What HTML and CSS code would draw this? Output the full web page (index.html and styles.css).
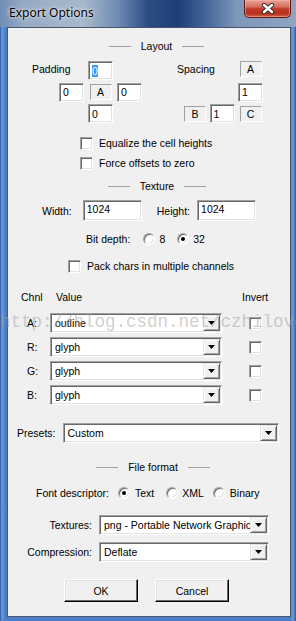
FILE: index.html
```html
<!DOCTYPE html>
<html>
<head>
<meta charset="utf-8">
<title>Export Options</title>
<link rel="stylesheet" href="styles.css">
</head>
<body>
<div class="window">
  <div class="titlebar">
    <span class="title">Export Options</span>
    <div class="close">
      <svg width="14" height="11" viewBox="0 0 14 11">
        <path d="M3 2 L11 9 M11 2 L3 9" stroke="#3b3030" stroke-width="4.4" stroke-linecap="round"/>
        <path d="M3 2 L11 9 M11 2 L3 9" stroke="#ffffff" stroke-width="2.4" stroke-linecap="round"/>
      </svg>
    </div>
  </div>
  <div class="client">
    <div class="heading h-layout"><span class="rule"></span><span>Layout</span><span class="rule"></span></div>
    <div class="layout-row">
      <div class="pad-grid">
        <span class="glabel">Padding</span>
        <div class="field f-top"><span class="sel">0</span></div>
        <div class="field f-left">0</div>
        <div class="sbox s-mid">A</div>
        <div class="field f-right">0</div>
        <div class="field f-bottom">0</div>
      </div>
      <div class="spc-grid">
        <span class="glabel">Spacing</span>
        <div class="sbox s-a">A</div>
        <div class="field f-c2r2">1</div>
        <div class="sbox s-b">B</div>
        <div class="field f-c1r3">1</div>
        <div class="sbox s-c">C</div>
      </div>
    </div>
    <div class="checks">
      <div class="check"><span class="cb"></span><span>Equalize the cell heights</span></div>
      <div class="check"><span class="cb"></span><span>Force offsets to zero</span></div>
    </div>
    <div class="heading h-texture"><span class="rule"></span><span>Texture</span><span class="rule"></span></div>
    <div class="size-row">
      <span>Width:</span>
      <div class="field wide w-first">1024</div>
      <span class="h-label">Height:</span>
      <div class="field wide w-second">1024</div>
    </div>
    <div class="bit-row">
      <span>Bit depth:</span>
      <span class="rd r-first"></span><span class="rtext">8</span>
      <span class="rd on r-gap"></span><span class="rtext">32</span>
    </div>
    <div class="check pack"><span class="cb"></span><span>Pack chars in multiple channels</span></div>
    <div class="chan-table">
      <span class="th">Chnl</span>
      <span class="th th-value">Value</span>
      <span class="th th-invert">Invert</span>

      <span class="rowlabel">A:</span>
      <div class="combo"><span class="val">outline</span><span class="drop"><svg width="7" height="4" viewBox="0 0 7 4"><polygon points="0,0 7,0 3.5,4" fill="#000"/></svg></span></div>
      <span class="cb inv"></span>

      <span class="rowlabel">R:</span>
      <div class="combo"><span class="val">glyph</span><span class="drop"><svg width="7" height="4" viewBox="0 0 7 4"><polygon points="0,0 7,0 3.5,4" fill="#000"/></svg></span></div>
      <span class="cb inv"></span>

      <span class="rowlabel">G:</span>
      <div class="combo"><span class="val">glyph</span><span class="drop"><svg width="7" height="4" viewBox="0 0 7 4"><polygon points="0,0 7,0 3.5,4" fill="#000"/></svg></span></div>
      <span class="cb inv"></span>

      <span class="rowlabel">B:</span>
      <div class="combo"><span class="val">glyph</span><span class="drop"><svg width="7" height="4" viewBox="0 0 7 4"><polygon points="0,0 7,0 3.5,4" fill="#000"/></svg></span></div>
      <span class="cb inv"></span>
    </div>
    <div class="presets-row">
      <span>Presets:</span>
      <div class="combo presets"><span class="val">Custom</span><span class="drop"><svg width="7" height="4" viewBox="0 0 7 4"><polygon points="0,0 7,0 3.5,4" fill="#000"/></svg></span></div>
    </div>
    <div class="heading h-file"><span class="rule"></span><span>File format</span><span class="rule"></span></div>
    <div class="fd-row">
      <span>Font descriptor:</span>
      <span class="rd on fd-r1"></span><span class="rtext2">Text</span>
      <span class="rd fd-r2"></span><span class="rtext">XML</span>
      <span class="rd fd-r3"></span><span class="rtext2">Binary</span>
    </div>
    <div class="form-rows">
      <span class="flabel">Textures:</span>
      <div class="combo"><span class="val">png - Portable Network Graphics</span><span class="drop"><svg width="7" height="4" viewBox="0 0 7 4"><polygon points="0,0 7,0 3.5,4" fill="#000"/></svg></span></div>
      <span class="flabel">Compression:</span>
      <div class="combo"><span class="val">Deflate</span><span class="drop"><svg width="7" height="4" viewBox="0 0 7 4"><polygon points="0,0 7,0 3.5,4" fill="#000"/></svg></span></div>
    </div>
    <div class="buttons">
      <div class="btn">OK</div>
      <div class="btn">Cancel</div>
    </div>
  </div>
  <div class="watermark">http://blog.csdn.net/czhilove</div>
</div>
</body>
</html>
```
FILE: styles.css
```css
html, body {
  margin: 0;
  padding: 0;
}
body {
  width: 296px;
  height: 621px;
  overflow: hidden;
  font-family: "Liberation Sans", Arial, sans-serif;
  font-size: 10.5px;
  color: #000;
}
.window {
  position: relative;
  width: 296px;
  height: 621px;
  overflow: hidden;
  display: flex;
  flex-direction: column;
  background: linear-gradient(to right, #2f5a9a 0, #6b9ce0 2px, #4c7fc8 5px, #4c7fc8 290px, #6b9ce0 293px, #2f5a9a 296px);
}
.titlebar {
  height: 27px;
  flex: none;
  display: flex;
  align-items: flex-start;
  background: linear-gradient(to right, #6f8db6 0%, #97aac3 8%, #a9b9cd 28%, #6d8ab2 40%, #2a4d84 50%, #1d3f76 60%, #3b5e94 68%, #7e97b9 80%, #8ea4c1 100%);
}
.title {
  font-family: "Noto Sans", "Open Sans", sans-serif;
  font-size: 12px;
  line-height: 26px;
  padding-left: 9px;
  color: #000;
  text-shadow: 0 0 5px rgba(255, 255, 255, 0.85), 0 0 2px rgba(255, 255, 255, 0.7);
}
.close {
  margin-left: auto;
  margin-right: 5px;
  width: 47px;
  height: 18px;
  box-sizing: border-box;
  border: 1px solid #5c1c14;
  border-top: none;
  border-radius: 0 0 5px 5px;
  background: linear-gradient(#e9a396 0%, #d66f60 40%, #c23a2a 52%, #b8321f 80%, #d0604a 100%);
  box-shadow: inset 0 0 0 1px rgba(255, 190, 180, 0.45);
  display: flex;
  align-items: center;
  justify-content: center;
}
.client {
  flex: none;
  margin: 0 5px 0 7px;
  height: 590px;
  box-sizing: border-box;
  border: 1px solid #46556c;
  background: #f0f0f0;
}

/* headings */
.heading {
  display: flex;
  align-items: center;
  justify-content: center;
  gap: 10px;
  height: 14px;
  padding-left: 15px;
}
.rule {
  width: 22px;
  height: 1px;
  background: #a0a0a0;
}
.h-layout { margin-top: 11px; }
.h-texture { margin-top: 6px; padding-left: 16px; }
.h-file { margin-top: 17px; padding-left: 8px; }

/* sunken controls */
.field {
  box-sizing: border-box;
  height: 19px;
  background: #fff;
  border: 1px solid;
  border-color: #a0a0a0 #fff #fff #a0a0a0;
  box-shadow: inset 1px 1px 0 #696969, inset -1px -1px 0 #e3e3e3;
  padding: 0 3px;
  display: flex;
  align-items: center;
  white-space: nowrap;
}
.sel {
  background: #3399ff;
  color: #fff;
}
.sbox {
  width: 22px;
  height: 16px;
  box-sizing: border-box;
  border: 1px solid;
  border-color: #a0a0a0 #fff #fff #a0a0a0;
  display: flex;
  align-items: center;
  justify-content: center;
  align-self: center;
  justify-self: center;
}

/* layout section */
.layout-row {
  display: flex;
  margin-top: 8px;
  padding-left: 18px;
  gap: 35px;
}
.pad-grid {
  display: grid;
  grid-template-columns: 29px 25px 25px 25px;
  grid-template-rows: 19px 19px 19px;
  column-gap: 4px;
  row-gap: 2.5px;
}
.spc-grid {
  display: grid;
  grid-template-columns: 29px 25px 25px;
  grid-template-rows: 19px 19px 19px;
  column-gap: 3.5px;
  row-gap: 2.5px;
}
.glabel {
  grid-row: 1;
  grid-column: 1 / 3;
  align-self: center;
  margin-top: -3px;
}
.pad-grid .glabel { padding-left: 6px; }
.f-top { grid-row: 1; grid-column: 3; }
.f-left { grid-row: 2; grid-column: 2; }
.s-mid { grid-row: 2; grid-column: 3; }
.f-right { grid-row: 2; grid-column: 4; }
.f-bottom { grid-row: 3; grid-column: 3; }
.s-a { grid-row: 1; grid-column: 3; margin-top: -3px; }
.f-c2r2 { grid-row: 2; grid-column: 3; }
.s-b { grid-row: 3; grid-column: 1; justify-self: end; }
.f-c1r3 { grid-row: 3; grid-column: 2; }
.s-c { grid-row: 3; grid-column: 3; }

/* checks */
.checks {
  margin-top: 10px;
  padding-left: 72px;
}
.check {
  display: flex;
  align-items: center;
  height: 20px;
  gap: 6px;
}
.cb {
  display: block;
  width: 13px;
  height: 13px;
  box-sizing: border-box;
  background: #fff;
  border: 1px solid;
  border-color: #a0a0a0 #fff #fff #a0a0a0;
  box-shadow: inset 1px 1px 0 #696969, inset -1px -1px 0 #e3e3e3;
}
.pack {
  margin-top: 10px;
  padding-left: 60px;
}

/* texture */
.size-row {
  display: flex;
  align-items: center;
  margin-top: 7px;
  height: 21px;
  padding-left: 34px;
}
.field.wide {
  width: 59px;
  height: 21px;
  align-items: flex-start;
  padding-top: 2px;
}
.w-first { margin-left: 11px; }
.h-label { margin-left: 15px; }
.w-second { margin-left: 7px; }
.bit-row {
  display: flex;
  align-items: center;
  margin-top: 11px;
  height: 14px;
  padding-left: 78px;
}
.rd {
  position: relative;
  display: block;
  width: 12px;
  height: 12px;
  box-sizing: border-box;
  border-radius: 50%;
  background: #fff;
  border: 1px solid;
  border-color: #a0a0a0 #fff #fff #a0a0a0;
  box-shadow: inset 1px 1px 0 #696969, inset -1px -1px 0 #e3e3e3;
}
.rd.on::after {
  content: "";
  position: absolute;
  left: 3px;
  top: 3px;
  width: 4px;
  height: 4px;
  border-radius: 50%;
  background: #000;
}
.r-first { margin-left: 13px; }
.r-gap { margin-left: 12px; }
.rtext { margin-left: 4px; }
.rtext2 { margin-left: 5px; }

/* channel table */
.chan-table {
  display: grid;
  margin-top: 14px;
  padding-left: 13px;
  grid-template-columns: 29px 172px 20px 30px;
  grid-template-rows: 19px 20px 20px 20px 20px;
  row-gap: 4px;
}
.th {
  align-self: start;
  line-height: 14px;
}
.th-value { padding-left: 6px; }
.th-invert { grid-column: 4 / 5; white-space: nowrap; }
.rowlabel {
  align-self: center;
  padding-left: 6px;
}
.cb.inv {
  grid-column: 4;
  align-self: center;
  margin-left: 7px;
}

/* combo */
.combo {
  display: flex;
  align-items: center;
  height: 20px;
  box-sizing: border-box;
  background: #fff;
  border: 1px solid;
  border-color: #a0a0a0 #fff #fff #a0a0a0;
  box-shadow: inset 1px 1px 0 #696969, inset -1px -1px 0 #e3e3e3;
  padding: 1px;
  overflow: hidden;
}
.combo .val {
  flex: 1;
  min-width: 0;
  padding-left: 3px;
  white-space: nowrap;
  overflow: hidden;
}
.drop {
  flex: none;
  width: 17px;
  height: 16px;
  box-sizing: border-box;
  background: #f0f0f0;
  border: 1px solid;
  border-color: #e3e3e3 #696969 #696969 #e3e3e3;
  box-shadow: inset 1px 1px 0 #fff, inset -1px -1px 0 #a0a0a0;
  display: flex;
  align-items: center;
  justify-content: center;
}
.drop svg { display: block; }

.presets-row {
  display: flex;
  align-items: center;
  margin-top: 18px;
  padding-left: 9px;
  gap: 7px;
}
.combo.presets { width: 216px; }

/* file format */
.fd-row {
  display: flex;
  align-items: center;
  margin-top: 12px;
  height: 14px;
  padding-left: 28px;
}
.fd-r1 { margin-left: 9px; }
.fd-r2 { margin-left: 12px; }
.fd-r3 { margin-left: 9px; }

.form-rows {
  display: grid;
  margin-top: 15px;
  grid-template-columns: 84px 170px;
  grid-auto-rows: 20px;
  column-gap: 7px;
  row-gap: 7px;
}
.flabel {
  justify-self: end;
  align-self: center;
}

.buttons {
  display: flex;
  margin-top: 17px;
  padding-left: 56px;
  gap: 17px;
}
.btn {
  width: 74px;
  height: 23px;
  box-sizing: border-box;
  background: #f0f0f0;
  border: 1px solid;
  border-color: #fff #000 #000 #fff;
  box-shadow: inset -1px -1px 0 #696969, inset 1px 1px 0 #e3e3e3;
  display: flex;
  align-items: center;
  justify-content: center;
}

.watermark {
  position: absolute;
  left: 0;
  top: 312px;
  font-family: "Liberation Mono", "Courier New", monospace;
  font-size: 17.5px;
  color: rgba(160, 160, 160, 0.5);
  white-space: nowrap;
  pointer-events: none;
}
```
